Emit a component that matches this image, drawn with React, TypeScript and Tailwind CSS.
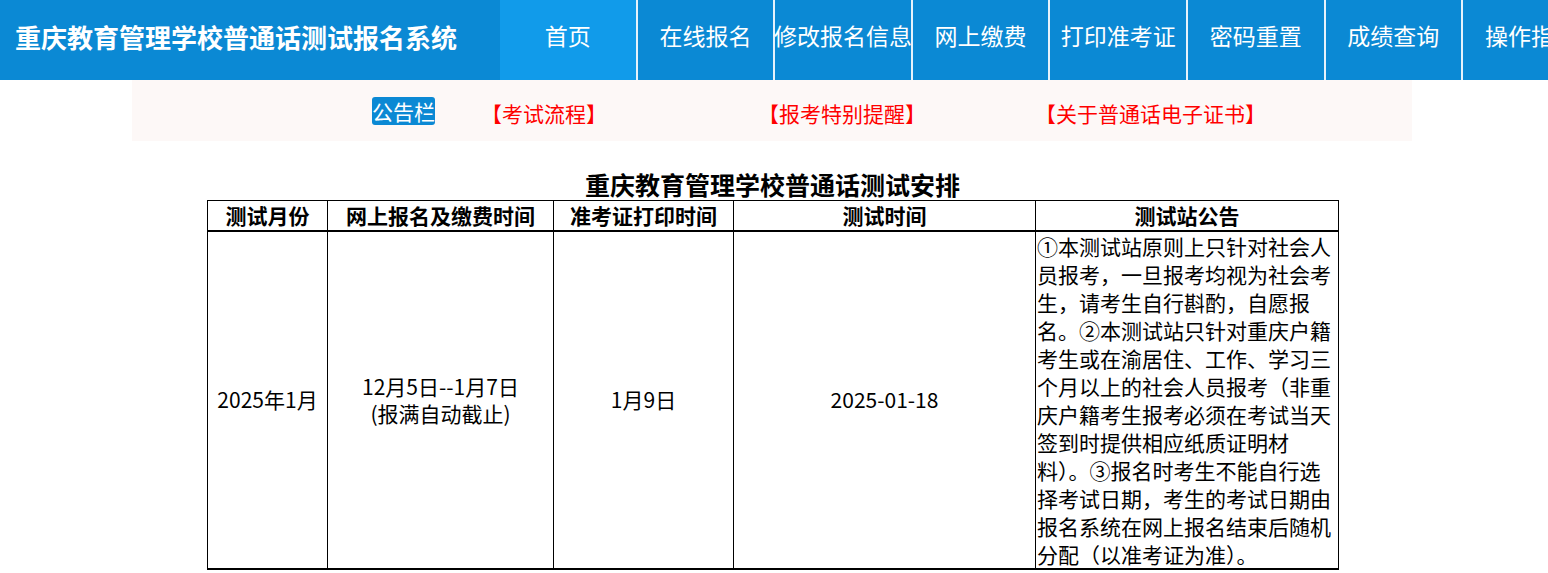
const navItems = ['首页', '在线报名', '修改报名信息', '网上缴费', '打印准考证', '密码重置', '成绩查询', '操作指南'];

const links = ['【考试流程】', '【报考特别提醒】', '【关于普通话电子证书】'];

const notice =
  '①本测试站原则上只针对社会人员报考，一旦报考均视为社会考生，请考生自行斟酌，自愿报名。②本测试站只针对重庆户籍考生或在渝居住、工作、学习三个月以上的社会人员报考（非重庆户籍考生报考必须在考试当天签到时提供相应纸质证明材料）。③报名时考生不能自行选择考试日期，考生的考试日期由报名系统在网上报名结束后随机分配（以准考证为准）。';

export default function App() {
  return (
    <div className="h-[573px] overflow-hidden bg-white font-['Noto_Sans_CJK_SC',sans-serif] text-black">
      <header className="flex h-[80px] bg-[#0b89d4]">
        <div className="flex w-[500px] shrink-0 items-center pb-[8px] pl-[15px] text-[26px] font-bold text-white">
          重庆教育管理学校普通话测试报名系统
        </div>
        <nav className="flex">
          {navItems.map((item, i) => (
            <a
              key={item}
              href="#"
              className={`flex w-[137.6px] shrink-0 items-center justify-center whitespace-nowrap border-r-2 border-[#e6f2fb] pb-[9px] text-[23px] text-white ${
                i === 0 ? 'bg-[#119bea]' : ''
              }`}
            >
              {item}
            </a>
          ))}
        </nav>
      </header>

      <div className="ml-[132px] flex h-[61px] w-[1280px] items-center bg-[#fdf8f7] pl-[240px]">
        <span className="rounded-[3px] bg-[#0b89d4] text-[21px] leading-[28px] text-white">公告栏</span>
        <div className="ml-[46px] flex pt-[6px]">
          {links.map((l) => (
            <a key={l} href="#" className="w-[277px] text-[21px] text-[#ff0000]">
              {l}
            </a>
          ))}
        </div>
      </div>

      <div className="ml-[207px] mt-[27px] w-[1131px]">
        <h2 className="text-center text-[25px] leading-[32px] font-bold">重庆教育管理学校普通话测试安排</h2>
        <table className="w-full table-fixed border-collapse text-[21px]">
          <colgroup>
            <col className="w-[120px]" />
            <col className="w-[226px]" />
            <col className="w-[180px]" />
            <col className="w-[302px]" />
            <col className="w-[303px]" />
          </colgroup>
          <thead>
            <tr className="h-[30px] border-b-2 border-black text-[21px] font-bold leading-[28px]">
              <th className="border border-black">测试月份</th>
              <th className="border border-black">网上报名及缴费时间</th>
              <th className="border border-black">准考证打印时间</th>
              <th className="border border-black">测试时间</th>
              <th className="border border-black">测试站公告</th>
            </tr>
          </thead>
          <tbody>
            <tr className="border-b-2 border-black text-center leading-[27px]">
              <td className="border border-black">2025年1月</td>
              <td className="border border-black">
                12月5日--1月7日
                <br />
                (报满自动截止)
              </td>
              <td className="border border-black">1月9日</td>
              <td className="border border-black">2025-01-18</td>
              <td className="border border-black px-[1px] text-left text-[21px] leading-[28px]">{notice}</td>
            </tr>
          </tbody>
        </table>
      </div>
    </div>
  );
}
